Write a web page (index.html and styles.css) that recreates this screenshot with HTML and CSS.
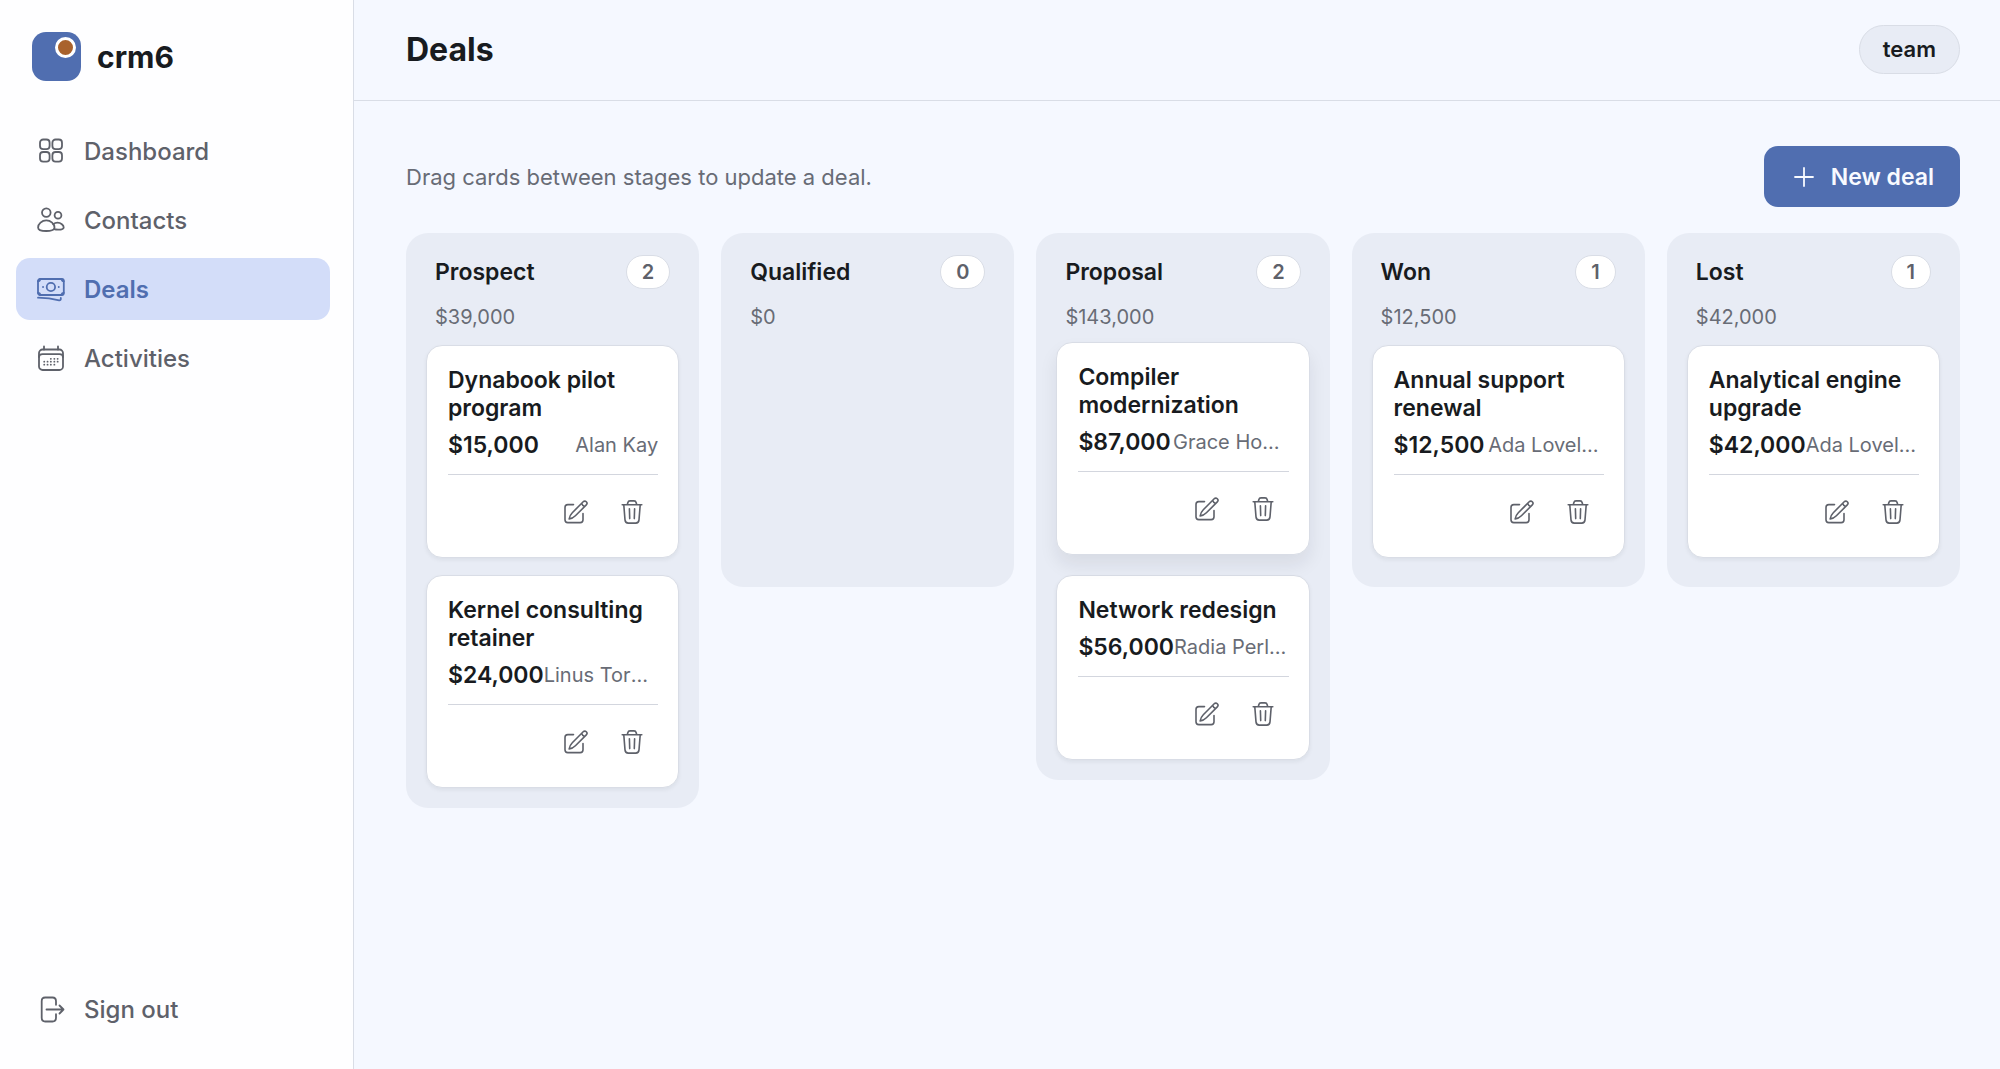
FILE: index.html
```html
<!DOCTYPE html>
<html lang="en">

<head>
    <meta charset="UTF-8">
    <meta name="viewport" content="width=device-width, initial-scale=1.0">
    <title>Deals - crm6</title>
    <link rel="stylesheet" href="styles.css">
</head>

<body>
    <svg class="sprite" aria-hidden="true">
        <symbol id="icon-dashboard" viewBox="0 0 28 28">
            <rect x="3" y="2.5" width="9.6" height="9.6" rx="3.2" />
            <rect x="15.4" y="2.5" width="9.6" height="9.6" rx="3.2" />
            <rect x="3" y="15" width="9.6" height="9.6" rx="3.2" />
            <rect x="15.4" y="15" width="9.6" height="9.6" rx="3.2" />
        </symbol>
        <symbol id="icon-contacts" viewBox="0 0 28 28">
            <circle cx="9.3" cy="6.6" r="4.3" />
            <circle cx="21" cy="9.3" r="3.4" />
            <path d="M9.3 14.4c-4.5 0-8.2 3.7-8.2 7 0 2.7 3.8 3.6 8.2 3.6s8.2-.9 8.2-3.6c0-3.3-3.7-7-8.2-7z" />
            <path d="M16.2 18.4c1.2-1.100 2.700-1.700 4.300-1.700 3.400 0 6.200 2.400 6.200 4.700 0 1.700-2.600 2.200-5.600 2.200-1.400 0-2.700-.1-3.700-.5" />
        </symbol>
        <symbol id="icon-deals" viewBox="0 0 28 28">
            <rect x="1" y="4" width="25.8" height="16" rx="2" />
            <circle cx="13.9" cy="12" r="4.2" />
            <path d="M1 6.2c1.300 0 2.200-.9 2.200-2.200M26.800 6.200c-1.300 0-2.200-.9-2.200-2.200M1 17.800c1.300 0 2.200.9 2.200 2.200M26.800 17.800c-1.300 0-2.200.9-2.200 2.200" />
            <path d="M6 12h.1M21.700 12h.1" />
            <path d="M1 22.700c7.500 0 14.500.8 21.200 2.600.9.200 1.600-.4 1.600-1.300v-1" />
        </symbol>
        <symbol id="icon-activities" viewBox="0 0 28 28">
            <rect x="2" y="5.5" width="24" height="20.5" rx="3.6" />
            <path d="M2 13c0-2.100 1.400-2.800 3.600-2.800h16.800c2.200 0 3.600.7 3.600 2.800M7 2.500v3M21 2.500v3" />
            <path class="dots" d="M13.800 14.800h.1M17.300 14.800h.1M20.600 14.800h.1M7.200 17.700h.1M10.500 17.700h.1M13.800 17.700h.1M17.300 17.700h.1M20.600 17.700h.1M7.200 20.700h.1M10.500 20.700h.1M13.800 20.700h.1M17.300 20.700h.1" />
        </symbol>
        <symbol id="icon-signout" viewBox="0 0 28 28">
            <path d="M19 9.800V6.200c0-2.300-1.200-3.700-3.500-3.700H8.200c-2.300 0-3.500 1.400-3.500 3.700v16.600c0 2.300 1.200 3.700 3.500 3.700h7.300c2.300 0 3.500-1.400 3.500-3.700v-3.600" />
            <path d="M9.500 14.500h17M22.500 10.500l4 4-4 4" />
        </symbol>
        <symbol id="icon-plus" viewBox="0 0 28 28">
            <path d="M14 5v18M5 14h18" />
        </symbol>
        <symbol id="icon-edit" viewBox="0 0 24 24">
            <path d="M9.500 4.600H3.800C2 4.600 1 5.600 1 7.400v12.400c0 1.800 1 2.800 2.800 2.800h12.400c1.800 0 2.800-1 2.800-2.800v-6.300" />
            <path d="M19.200 1.800 8.300 12.700c-1.800 1.800-2.900 4.100-3.200 6.300 2.200-.3 4.500-1.400 6.300-3.200L22.300 4.900c.9-.9.900-2.200 0-3.100s-2.200-.9-3.100 0zM17.700 3.300c.3 1.400 1.600 2.700 3.100 3.100" />
        </symbol>
        <symbol id="icon-trash" viewBox="0 0 24 24">
            <path d="M2.200 4.800h19.600M7.300 4.700l.5-2c.3-1.200 1-1.800 2.200-1.800h4c1.200 0 1.900.6 2.200 1.800l.5 2" />
            <path d="m3.800 4.900 1.200 15c.2 2.200 1.200 3.200 3.300 3.200h7.400c2.100 0 3.100-1 3.300-3.200l1.200-15M9.400 8.800l.3 9.800M14.600 8.800l-.3 9.800" />
        </symbol>
    </svg>

    <div class="app">
        <aside class="sidebar">
            <div class="brand">
                <span class="logo"></span>
                <span class="brand-name">crm6</span>
            </div>
            <nav class="nav">
                <a class="nav-item" href="#dashboard"><svg class="icon"><use href="#icon-dashboard" /></svg>Dashboard</a>
                <a class="nav-item" href="#contacts"><svg class="icon"><use href="#icon-contacts" /></svg>Contacts</a>
                <a class="nav-item active" href="#deals" aria-current="page"><svg class="icon"><use href="#icon-deals" /></svg>Deals</a>
                <a class="nav-item" href="#activities"><svg class="icon"><use href="#icon-activities" /></svg>Activities</a>
            </nav>
            <button class="nav-item signout" type="button"><svg class="icon"><use href="#icon-signout" /></svg>Sign out</button>
        </aside>

        <div class="page">
            <header class="topbar">
                <h1>Deals</h1>
                <span class="team">team</span>
            </header>

            <main class="content">
                <div class="toolbar">
                    <p>Drag cards between stages to update a deal.</p>
                    <button class="button" type="button"><svg class="icon"><use href="#icon-plus" /></svg>New deal</button>
                </div>

                <div class="board">
                    <section class="column">
                        <div class="column-head">
                            <h2>Prospect</h2>
                            <span class="count">2</span>
                        </div>
                        <p class="total">$39,000</p>
                        <div class="cards">
                            <article class="card" draggable="true">
                                <h3>Dynabook pilot program</h3>
                                <div class="meta">
                                    <strong>$15,000</strong>
                                    <span class="owner">Alan Kay</span>
                                </div>
                                <div class="actions">
                                    <button type="button" aria-label="Edit"><svg><use href="#icon-edit" /></svg></button>
                                    <button type="button" aria-label="Delete"><svg><use href="#icon-trash" /></svg></button>
                                </div>
                            </article>
                            <article class="card" draggable="true">
                                <h3>Kernel consulting retainer</h3>
                                <div class="meta">
                                    <strong>$24,000</strong>
                                    <span class="owner">Linus Torvalds</span>
                                </div>
                                <div class="actions">
                                    <button type="button" aria-label="Edit"><svg><use href="#icon-edit" /></svg></button>
                                    <button type="button" aria-label="Delete"><svg><use href="#icon-trash" /></svg></button>
                                </div>
                            </article>
                        </div>
                    </section>

                    <section class="column">
                        <div class="column-head">
                            <h2>Qualified</h2>
                            <span class="count">0</span>
                        </div>
                        <p class="total">$0</p>
                        <div class="cards"></div>
                    </section>

                    <section class="column">
                        <div class="column-head">
                            <h2>Proposal</h2>
                            <span class="count">2</span>
                        </div>
                        <p class="total">$143,000</p>
                        <div class="cards">
                            <article class="card lifted" draggable="true">
                                <h3>Compiler modernization</h3>
                                <div class="meta">
                                    <strong>$87,000</strong>
                                    <span class="owner">Grace Hopper</span>
                                </div>
                                <div class="actions">
                                    <button type="button" aria-label="Edit"><svg><use href="#icon-edit" /></svg></button>
                                    <button type="button" aria-label="Delete"><svg><use href="#icon-trash" /></svg></button>
                                </div>
                            </article>
                            <article class="card" draggable="true">
                                <h3>Network redesign</h3>
                                <div class="meta">
                                    <strong>$56,000</strong>
                                    <span class="owner">Radia Perlman</span>
                                </div>
                                <div class="actions">
                                    <button type="button" aria-label="Edit"><svg><use href="#icon-edit" /></svg></button>
                                    <button type="button" aria-label="Delete"><svg><use href="#icon-trash" /></svg></button>
                                </div>
                            </article>
                        </div>
                    </section>

                    <section class="column">
                        <div class="column-head">
                            <h2>Won</h2>
                            <span class="count">1</span>
                        </div>
                        <p class="total">$12,500</p>
                        <div class="cards">
                            <article class="card" draggable="true">
                                <h3>Annual support renewal</h3>
                                <div class="meta">
                                    <strong>$12,500</strong>
                                    <span class="owner">Ada Lovelace</span>
                                </div>
                                <div class="actions">
                                    <button type="button" aria-label="Edit"><svg><use href="#icon-edit" /></svg></button>
                                    <button type="button" aria-label="Delete"><svg><use href="#icon-trash" /></svg></button>
                                </div>
                            </article>
                        </div>
                    </section>

                    <section class="column">
                        <div class="column-head">
                            <h2>Lost</h2>
                            <span class="count">1</span>
                        </div>
                        <p class="total">$42,000</p>
                        <div class="cards">
                            <article class="card" draggable="true">
                                <h3>Analytical engine upgrade</h3>
                                <div class="meta">
                                    <strong>$42,000</strong>
                                    <span class="owner">Ada Lovelace</span>
                                </div>
                                <div class="actions">
                                    <button type="button" aria-label="Edit"><svg><use href="#icon-edit" /></svg></button>
                                    <button type="button" aria-label="Delete"><svg><use href="#icon-trash" /></svg></button>
                                </div>
                            </article>
                        </div>
                    </section>
                </div>
            </main>
        </div>
    </div>
</body>

</html>
```

FILE: styles.css
```css
*,
*::after {
    box-sizing: border-box;
}
body {
    margin: 0;
    font-family: Inter, "Liberation Sans", sans-serif;
    font-size: 24px;
    color: #181b20;
    background-color: #f5f8ff;
}
h1, h2, h3, p {
    margin: 0;
}
button {
    font-family: inherit;
    border: none;
    background: none;
    cursor: pointer;
}
svg {
    fill: none;
    stroke: currentColor;
    stroke-width: 1.6;
    stroke-linecap: round;
    stroke-linejoin: round;
}
.sprite {
    display: none;
}
.icon {
    width: 28px;
    height: 28px;
    flex-shrink: 0;
    stroke-width: 1.8;
}
.app {
    display: flex;
    min-height: 100vh;
}

/* sidebar */
.sidebar {
    display: flex;
    flex-direction: column;
    flex-shrink: 0;
    width: 354px;
    padding: 32px 23px 29px 16px;
    background-color: #fefeff;
    border-right: 1px solid #d9dde6;
}
.brand {
    display: flex;
    align-items: center;
    gap: 16px;
    padding: 0 16px;
    margin-bottom: 39px;
}
.logo {
    position: relative;
    width: 49px;
    height: 49px;
    border-radius: 14px;
    background-color: #506eb0;
}
.logo::after {
    content: "";
    position: absolute;
    top: 5px;
    right: 5px;
    width: 21px;
    height: 21px;
    border: 3px solid #fff;
    border-radius: 50%;
    background-color: #a9622c;
}
.brand-name {
    font-size: 30px;
    font-weight: 700;
}
.nav {
    display: flex;
    flex-direction: column;
    gap: 7px;
}
.nav-item {
    display: flex;
    align-items: center;
    gap: 19px;
    height: 62px;
    padding: 0 21px;
    border-radius: 14px;
    font-size: 24px;
    font-weight: 500;
    color: #5e616a;
    text-decoration: none;
}
.nav-item:hover {
    background-color: #eef2fc;
}
.nav-item.active {
    font-weight: 600;
    color: #506eb0;
    background-color: #d3ddf9;
}
.signout {
    margin-top: auto;
}
.dots {
    stroke-width: 1.8;
}

/* header */
.page {
    flex: 1;
    min-width: 0;
}
.topbar {
    display: flex;
    align-items: center;
    justify-content: space-between;
    height: 101px;
    padding: 0 40px 2px 52px;
    border-bottom: 1px solid #d9dde6;
}
h1 {
    font-size: 32px;
    font-weight: 700;
}
.team {
    display: flex;
    align-items: center;
    height: 49px;
    padding: 0 23px;
    border: 1px solid #d9dde6;
    border-radius: 25px;
    font-size: 22px;
    font-weight: 600;
    background-color: #e8ecf5;
}

/* board */
.content {
    padding: 45px 40px 40px 52px;
}
.toolbar {
    display: flex;
    align-items: center;
    justify-content: space-between;
    margin-bottom: 26px;
}
.toolbar p {
    font-size: 22px;
    color: #686c76;
}
.button {
    display: flex;
    align-items: center;
    gap: 13px;
    height: 61px;
    padding: 0 26px;
    border-radius: 14px;
    font-size: 23px;
    font-weight: 600;
    color: #f8faff;
    background-color: #506eb0;
}
.button:hover {
    background-color: #4562a2;
}
.board {
    display: grid;
    grid-template-columns: repeat(5, minmax(0, 1fr));
    align-items: start;
    gap: 22px;
}
.column {
    min-height: 354px;
    padding: 22px 20px 20px;
    border-radius: 22px;
    background-color: #e8ecf5;
}
.column-head {
    display: flex;
    align-items: center;
    justify-content: space-between;
    padding: 0 9px;
}
h2 {
    font-size: 23px;
    font-weight: 600;
}
.count {
    height: 34px;
    padding: 0 15px;
    border: 1px solid #d9dde6;
    border-radius: 17px;
    font-size: 20px;
    font-weight: 600;
    line-height: 32px;
    color: #5e616a;
    background-color: #fff;
}
.total {
    margin-top: 13px;
    padding: 0 9px;
    font-size: 20px;
    line-height: 30px;
    color: #686c76;
}
.cards {
    display: flex;
    flex-direction: column;
    gap: 17px;
    margin-top: 13px;
}
.card {
    padding: 20px 20px 20px 21px;
    border: 1px solid #d9dde6;
    border-radius: 16px;
    background-color: #fff;
    box-shadow: 0 2px 4px rgba(24, 27, 32, 0.06);
    cursor: grab;
}
.card.lifted,
.card:hover {
    box-shadow: 0 10px 18px rgba(24, 27, 32, 0.08);
    transform: translateY(-3px);
}
h3 {
    font-size: 23px;
    font-weight: 600;
    line-height: 28px;
}
.meta {
    display: flex;
    align-items: center;
    justify-content: space-between;
    margin-top: 8px;
    line-height: 30px;
}
.meta strong {
    flex-shrink: 0;
    font-size: 23px;
    font-weight: 600;
}
.owner {
    max-width: 55%;
    overflow: hidden;
    font-size: 20px;
    color: #686c76;
    text-overflow: ellipsis;
    white-space: nowrap;
}
.actions {
    display: flex;
    justify-content: flex-end;
    gap: 4px;
    margin-top: 14px;
    padding-top: 12px;
    border-top: 1px solid #d3d6de;
}
.actions button {
    display: flex;
    align-items: center;
    justify-content: center;
    width: 52px;
    height: 50px;
    padding: 0;
    border-radius: 12px;
    color: #5e616a;
}
.actions button:hover {
    background-color: #eef2fc;
}
.actions svg {
    width: 24px;
    height: 24px;
}
```
